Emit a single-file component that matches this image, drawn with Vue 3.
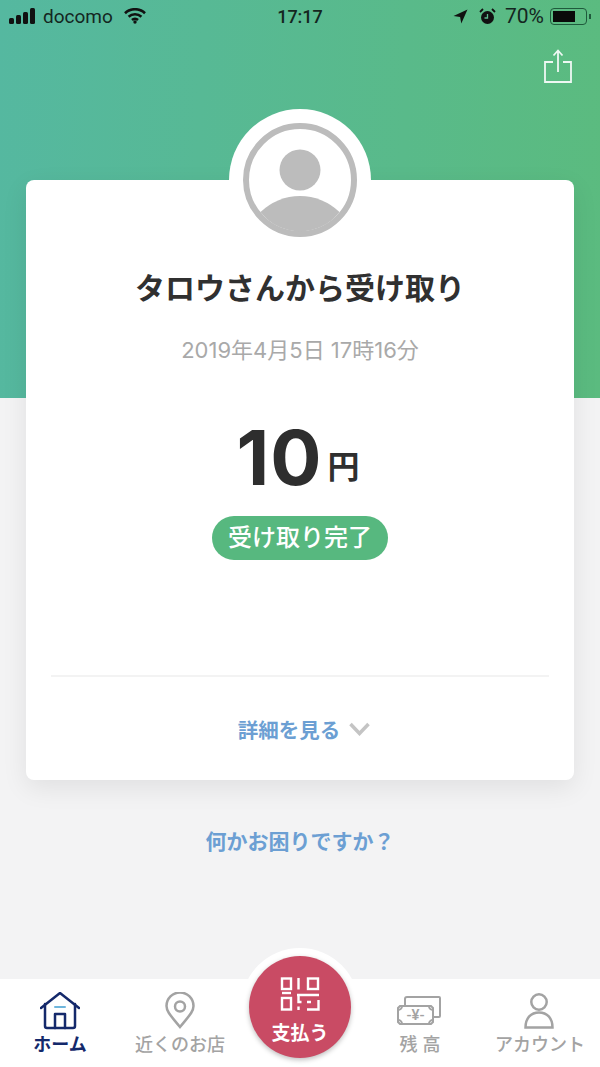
<template>
  <div class="page">
    <div class="backdrop"></div>

    <div class="status">
      <div class="status-left">
        <svg width="26" height="16" viewBox="0 0 26 16" class="signal">
          <rect x="0" y="10" width="5" height="6" rx="1.5" />
          <rect x="7" y="7" width="5" height="9" rx="1.5" />
          <rect x="14" y="4" width="5" height="12" rx="1.5" />
          <rect x="21" y="0" width="5" height="16" rx="1.5" />
        </svg>
        <span>docomo</span>
        <svg width="22" height="16" viewBox="0 0 22 16" class="wifi">
          <path d="M1 5.2a14.5 14.5 0 0 1 20 0" />
          <path d="M4.6 8.8a9.4 9.4 0 0 1 12.8 0" />
          <path d="M8 12a4.4 4.4 0 0 1 6 0" />
          <circle cx="11" cy="14" r="1.7" class="wifi-dot" />
        </svg>
      </div>
      <div class="status-time">17:17</div>
      <div class="status-right">
        <svg width="15" height="15" viewBox="0 0 15 15"><path d="M14.5 0.5 0.5 7l6.6 1 1.2 6.5z" fill="#111" /></svg>
        <svg width="17" height="17" viewBox="0 0 17 17" class="alarm">
          <circle cx="8.5" cy="9.5" r="6.5" fill="#111" />
          <path d="M8.5 6v4h-3" fill="none" stroke="#5fb88e" stroke-width="1.3" />
          <path d="M1 4 4 1M16 4l-3-3" stroke="#111" stroke-width="1.8" />
        </svg>
        <span class="pct">70%</span>
        <span class="battery"><i class="battery-fill"></i></span>
      </div>
    </div>

    <div class="actions">
      <svg width="28" height="34" viewBox="0 0 28 34" class="share">
        <path d="M9 13H1v20h26V13h-8M14 23V2M9.500 6.500 14 1.500 18.500 6.500" />
      </svg>
    </div>

    <section class="card">
      <div class="avatar-ring">
        <svg width="114" height="114" viewBox="0 0 114 114">
          <circle cx="57" cy="57" r="54" fill="#fff" stroke="#bcbcbc" stroke-width="6" />
          <circle cx="57" cy="47" r="20.500" fill="#bcbcbc" />
          <path d="M17.500 89A57 57 0 0 1 96.500 89 50 50 0 0 1 17.500 89z" fill="#bcbcbc" />
        </svg>
      </div>
      <h1 class="title">タロウさんから受け取り</h1>
      <p class="date">2019年4月5日 17時16分</p>
      <p class="amount"><b>10</b><span>円</span></p>
      <div class="pill">受け取り完了</div>
      <div class="detail-wrap">
        <a class="link">詳細を見る</a>
        <svg width="21" height="14" viewBox="0 0 21 14" class="chev"><path d="M1.500 2 10.500 11.500 19.500 2" /></svg>
      </div>
    </section>

    <a class="link help">何かお困りですか？</a>

    <nav class="tabs">
      <div class="tab active">
        <svg width="40" height="38" viewBox="0 0 40 38" class="ic">
          <path d="M1 16 20 1l19 15" />
          <path d="M5 12v22a2 2 0 0 0 2 2h26a2 2 0 0 0 2-2V12" />
          <path d="M15 36V22h10v14" />
          <path d="M15 15h10" class="dash" />
        </svg>
        <span>ホーム</span>
      </div>
      <div class="tab">
        <svg width="40" height="38" viewBox="0 0 40 38" class="ic">
          <path d="M20 35C12 25 6.500 20 6.500 14a13.500 13.500 0 0 1 27 0C33.500 20 28 25 20 35z" />
          <circle cx="20" cy="14.500" r="5" />
        </svg>
        <span>近くのお店</span>
      </div>
      <div class="tab pay-cell">
        <div class="pay">
          <svg width="40" height="34" viewBox="0 0 40 34" class="qr">
            <rect x="2" y="1.500" width="9" height="10.500" />
            <path d="M18.500 1v11.500" />
            <rect x="28" y="1.500" width="10" height="10.500" />
            <path d="M2 16h9" />
            <rect x="2" y="21" width="9" height="11.500" />
            <path d="M18.500 29.500v3.500" />
            <path d="M17 18h22M18.500 18v7h3" />
            <path d="M38.500 23v9.500H27M27 25h4" />
          </svg>
          <span>支払う</span>
        </div>
      </div>
      <div class="tab">
        <svg width="46" height="38" viewBox="0 0 46 38" class="ic thin">
          <path d="M8 13V7a2 2 0 0 1 2-2h32a1 1 0 0 1 1 1v18a1 1 0 0 1-1 1h-6" />
          <path d="M3 14h31l2 2v14l-2 2H3l-2-2V16z" />
          <path d="M1 18a4 4 0 0 0 4-4M32 14a4 4 0 0 0 4 4M36 28a4 4 0 0 0-4 4M5 32a4 4 0 0 0-4-4" />
          <text x="18.500" y="28" class="yen">-¥-</text>
        </svg>
        <span>残 高</span>
      </div>
      <div class="tab">
        <svg width="40" height="38" viewBox="0 0 40 38" class="ic">
          <circle cx="19" cy="10" r="7.700" />
          <path d="M5.500 35.500C5.500 26 11 20.500 19 20.500S32.500 26 32.500 35.500z" />
        </svg>
        <span>アカウント</span>
      </div>
    </nav>
  </div>
</template>

<script setup>
</script>

<style>
html, body {
  margin: 0;
  background: #f3f3f4;
}
</style>

<style scoped>
.page {
  position: relative;
  width: 600px;
  height: 1067px;
  overflow: hidden;
  display: flex;
  flex-direction: column;
  background: #f3f3f4;
  font-family: Inter, "Noto Sans CJK JP", sans-serif;
  color: #2f2f2f;
}

/* グラデーションの帯はカードの下に敷く */
.backdrop {
  position: absolute;
  left: 0;
  right: 0;
  top: 0;
  height: 398px;
  background: linear-gradient(92deg, #55b8a0, #5bbb7f);
}

.status {
  position: relative;
  height: 32px;
  display: grid;
  grid-template-columns: 1fr auto 1fr;
  align-items: center;
  padding: 0 9px;
  font-family: Roboto, sans-serif;
  font-size: 19px;
  color: #14261f;
}
.status-left, .status-right {
  display: flex;
  align-items: center;
}
.status-left { gap: 8px; }
.status-left .wifi { margin-left: 3px; }
.status-right { justify-content: flex-end; }
.status-right .alarm { margin: 0 9px 0 11px; }
.pct { margin-right: 6px; font-size: 21px; }
.status-time { font-weight: 500; font-size: 18px; }
.signal { fill: #111; }
.wifi path { fill: none; stroke: #111; stroke-width: 2.600; }
.wifi-dot { fill: #111; }
.battery {
  position: relative;
  width: 37px;
  height: 17px;
  border: 1px solid #1f5a3c;
  border-radius: 4px;
  padding: 2px;
  box-sizing: border-box;
  display: block;
  margin-right: 4px;
}
.battery::after {
  content: "";
  position: absolute;
  right: -5px;
  top: 5px;
  width: 2px;
  height: 5px;
  background: #1f5a3c;
}
.battery-fill {
  display: block;
  width: 70%;
  height: 100%;
  background: #0a0a0a;
}

.actions {
  position: relative;
  display: flex;
  justify-content: flex-end;
  padding: 17px 28px 0 0;
  height: 60px;
  box-sizing: border-box;
}
.share {
  fill: none;
  stroke: #eef8f3;
  stroke-width: 1.800;
}

.card {
  position: relative;
  margin: 88px 26px 0;
  height: 600px;
  box-sizing: border-box;
  background: #fff;
  border-radius: 8px;
  box-shadow: 0 8px 26px rgba(0, 0, 0, 0.08);
  display: flex;
  flex-direction: column;
  align-items: center;
  padding-top: 88px;
}
.avatar-ring {
  position: absolute;
  left: 50%;
  top: -71px;
  width: 142px;
  height: 142px;
  margin-left: -71px;
  border-radius: 50%;
  background: #fff;
  display: flex;
  align-items: center;
  justify-content: center;
}
.title {
  margin: 0;
  font-size: 30px;
  line-height: 40px;
  font-weight: 700;
  color: #303030;
}
.date {
  margin: 28px 0 0;
  font-size: 22px;
  line-height: 28px;
  color: #a9a9a9;
}
.amount {
  margin: 48px 0 0;
  padding-right: 4px;
  line-height: 90px;
  height: 90px;
  white-space: nowrap;
}
.amount b {
  font-size: 76px;
  font-weight: 700;
  letter-spacing: 1px;
  color: #2e2e2e;
}
.amount span {
  font-size: 32px;
  font-weight: 700;
  margin-left: 5px;
  vertical-align: 7px;
}
.pill {
  margin-top: 14px;
  width: 176px;
  height: 44px;
  border-radius: 22px;
  background: #57b87f;
  color: #fff;
  font-size: 24px;
  font-weight: 500;
  line-height: 43px;
  text-align: center;
}
.detail-wrap {
  position: absolute;
  left: 25px;
  right: 25px;
  bottom: 0;
  height: 105px;
  box-sizing: border-box;
  border-top: 2px solid #f3f3f3;
  display: flex;
  align-items: center;
  justify-content: center;
  gap: 9px;
  padding-left: 8px;
}
.link {
  color: #6c9fd3;
  font-size: 20.500px;
  font-weight: 700;
}
.chev {
  fill: none;
  stroke: #c4c4c4;
  stroke-width: 3.500;
}
.help {
  position: relative;
  margin-top: 47px;
  font-size: 21px;
  line-height: 30px;
  text-align: center;
}

.tabs {
  position: absolute;
  left: 0;
  right: 0;
  bottom: 0;
  height: 88px;
  background: #fff;
  display: grid;
  grid-template-columns: repeat(5, 1fr);
}
.tab {
  display: flex;
  flex-direction: column;
  align-items: center;
  padding-top: 13px;
  color: #a3a3a3;
  font-size: 18px;
  font-weight: 500;
  line-height: 24px;
}
.tab span { margin-top: 3px; }
.tab.active {
  color: #14296b;
  font-weight: 700;
}
.ic {
  fill: none;
  stroke: #a3a3a3;
  stroke-width: 2.500;
}
.ic.thin { stroke-width: 2; }
.active .ic { stroke: #14296b; stroke-linecap: round; stroke-linejoin: round; }
.active .ic .dash { stroke: #6fb6dc; stroke-width: 2; }
.yen {
  fill: #a3a3a3;
  stroke: none;
  font-size: 15px;
  text-anchor: middle;
  font-family: Roboto, sans-serif;
}
.pay-cell { position: relative; }
.pay {
  position: absolute;
  left: 9px;
  top: -23px;
  width: 102px;
  height: 102px;
  box-sizing: border-box;
  border-radius: 50%;
  background: #c94b64;
  color: #fff;
  display: flex;
  flex-direction: column;
  align-items: center;
  padding-top: 21px;
  font-size: 19px;
  font-weight: 700;
  line-height: 24px;
  box-shadow: 0 2px 5px rgba(0, 0, 0, 0.25), 0 0 0 8px #fff;
}
.pay span { margin-top: 11px; }
.qr {
  fill: none;
  stroke: #fff;
  stroke-width: 2.400;
}
</style>
